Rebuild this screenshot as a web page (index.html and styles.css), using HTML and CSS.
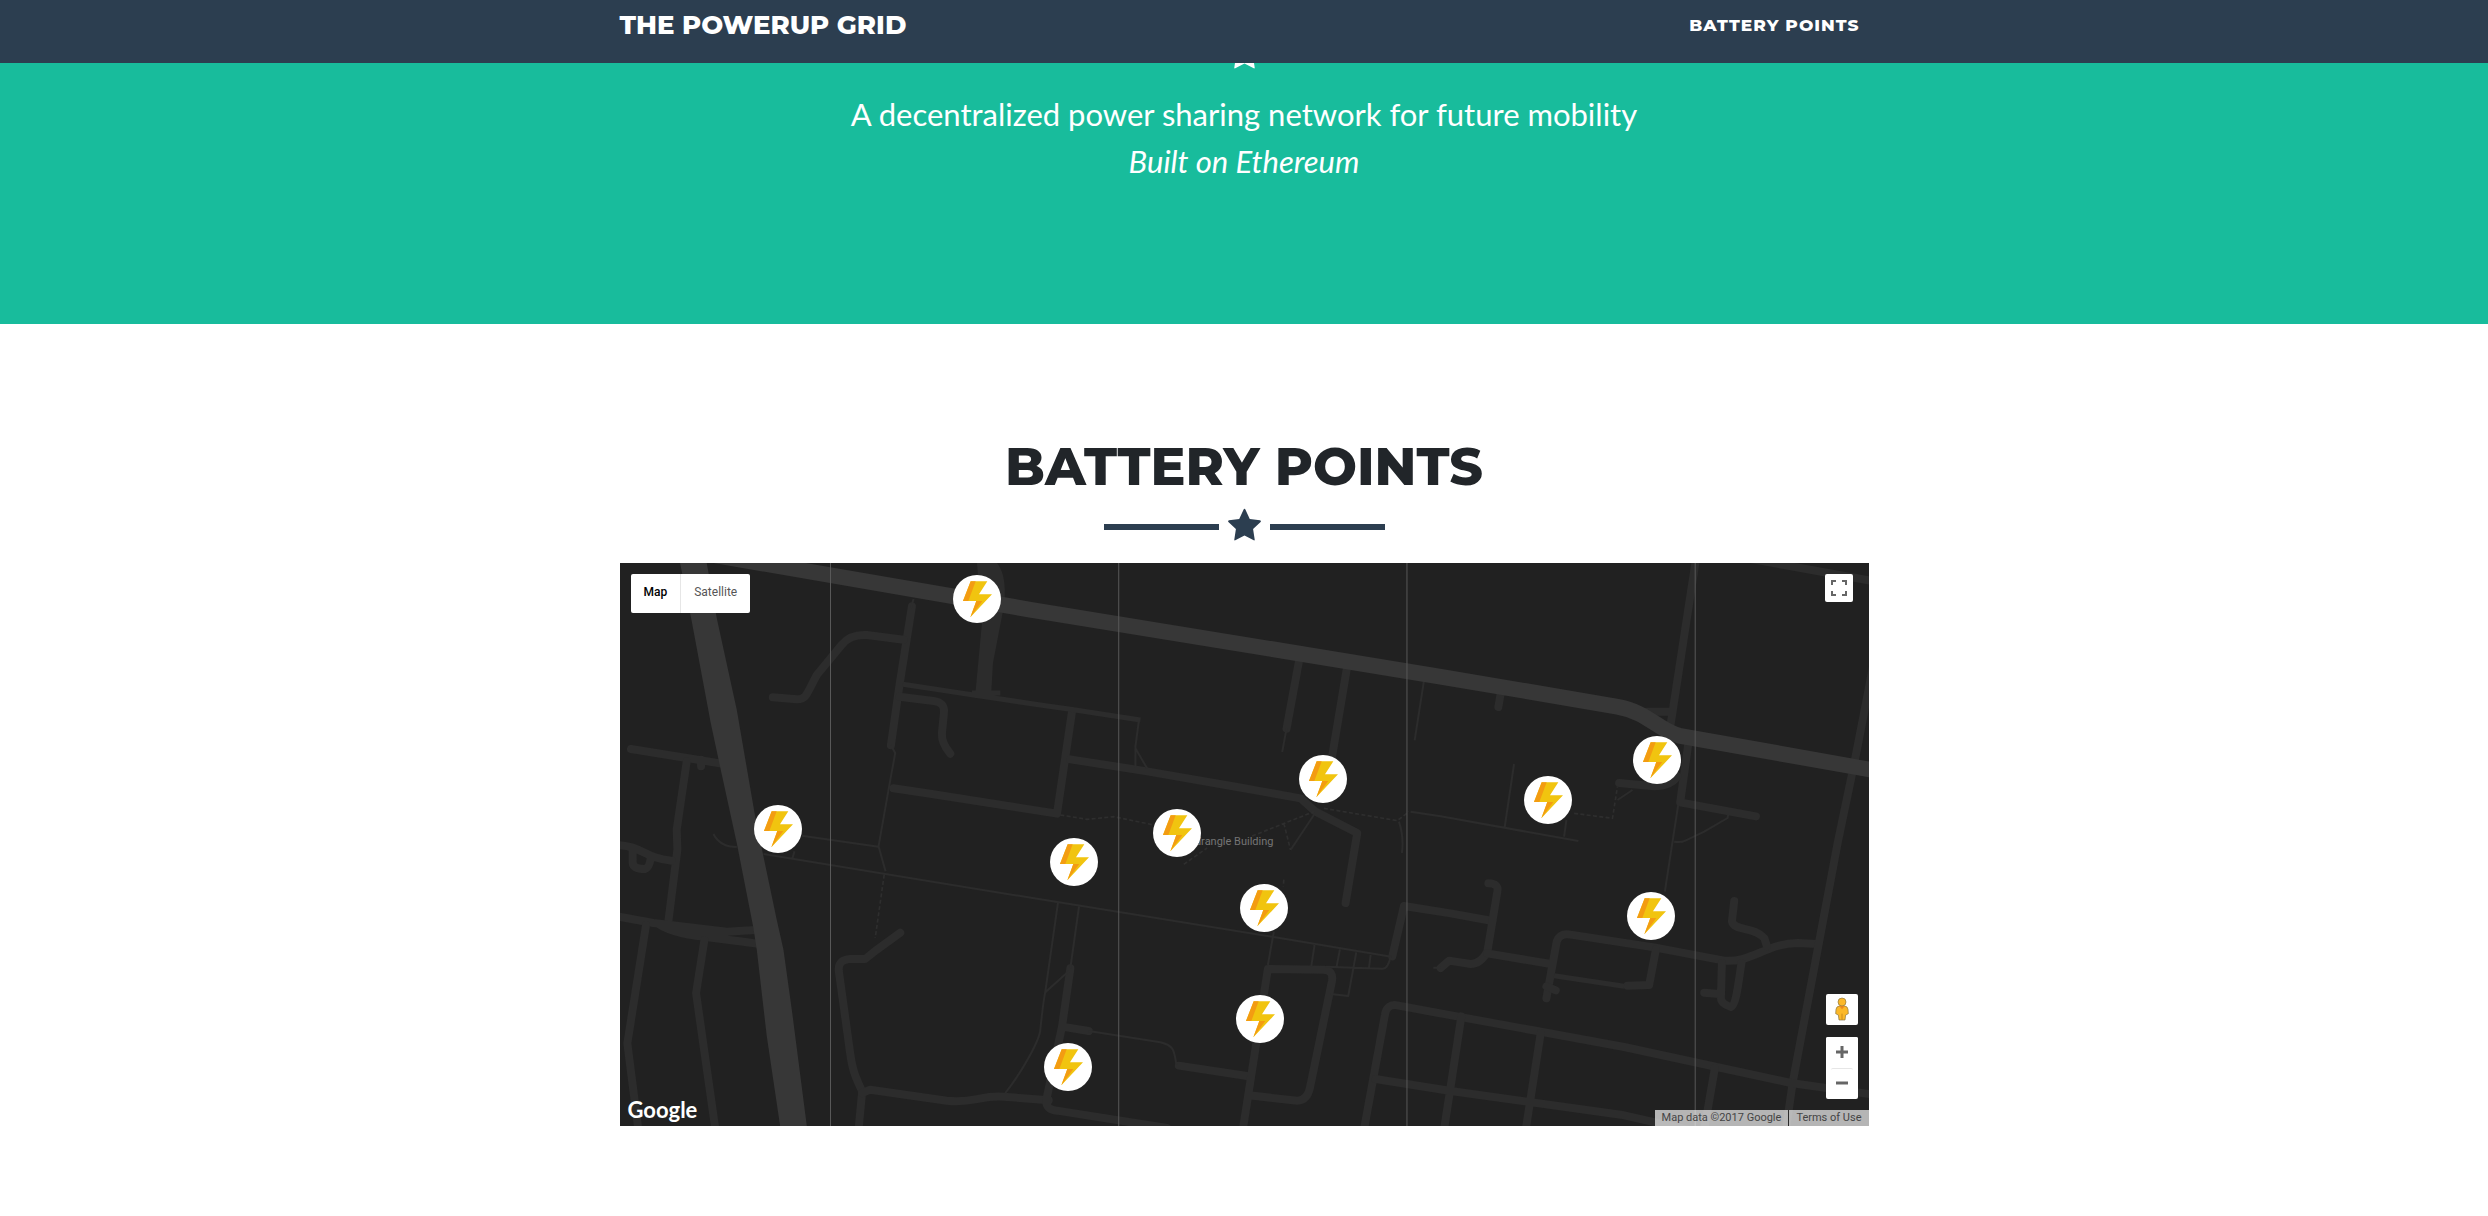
FILE: index.html
```html
<!DOCTYPE html>
<html lang="en">
<head>
<meta charset="utf-8">
<meta name="viewport" content="width=device-width, initial-scale=1">
<title>The PowerUp Grid</title>
<link rel="stylesheet" href="styles.css">
</head>
<body>
<svg class="symbols" aria-hidden="true">
  <symbol id="star" viewBox="0 0 100 96"><path d="M50 0Q52 0 53 3L66 31 97 35Q102 37 98 41L76 62 81 94Q81 97 78 96L50 81 22 96Q19 97 19 94L24 62 2 41Q-2 37 3 35L34 31 47 3Q48 0 50 0Z" fill="currentColor"/></symbol>
  <symbol id="bolt" viewBox="0 0 144 144">
    <path d="M53 19H103L78 58H117L52 127 70 78H30Z" fill="#f1c40f"/>
    <path d="M53 19H68L46 78H30Z" fill="#f39c12"/>
    <path d="M70 78H88L52 127Z" fill="#f39c12"/>
  </symbol>
</svg>

<header class="navbar">
  <nav class="container navbar-row">
    <a class="brand" href="#top">THE POWERUP GRID</a>
    <a class="nav-link" href="#points">BATTERY POINTS</a>
  </nav>
</header>

<main>
  <section class="hero" id="top">
    <div class="divider"><svg class="star"><use href="#star"/></svg></div>
    <p class="lead">A decentralized power sharing network for future mobility<br><em>Built on Ethereum</em></p>
  </section>

  <section class="points container" id="points">
    <h2 class="title">BATTERY POINTS</h2>
    <div class="divider"><svg class="star"><use href="#star"/></svg></div>

    <div class="map">
      <svg class="streets" viewBox="0 0 3744 1689" preserveAspectRatio="none" aria-hidden="true">
        <g class="road">
          <path d="M875 130L838 365 812 547"/>
          <path d="M850 230L740 216Q690 213 665 245L590 336C560 390 560 410 530 409L458 403"/>
          <path d="M838 401L940 414Q975 418 971 450L965 510Q963 540 990 572"/>
          <path d="M820 676L930 692 1310 752 1355 445"/>
          <path d="M33 558L200 585 305 602M243 590V610"/>
          <path d="M200 595L170 800 172 860 145 1075"/>
          <path d="M-10 846C70 850 70 885 155 893M38 860V900Q40 918 75 918 88 915 92 885"/>
          <path d="M-10 1060L100 1080 320 1106 405 1101M115 1083C170 1120 250 1118 410 1142"/>
          <path d="M78 1086L22 1441 55 1700M253 1131L228 1290 286 1700"/>
          <path d="M840 1109L770 1160 735 1188H690Q652 1190 656 1225L690 1471C698 1530 710 1550 726 1585L715 1700"/>
          <path d="M726 1590L750 1580 980 1613C1060 1622 1080 1596 1150 1601L1285 1612"/>
          <path d="M1350 1216L1325 1391 1278 1610Q1275 1640 1310 1643L1640 1695M1325 1391L1405 1404"/>
          <path d="M1675 1508L1880 1539"/>
          <path d="M1867 1700L1942 1218 2110 1220Q2140 1222 2134 1255L2068 1575Q2060 1612 2030 1613L1885 1597"/>
          <path d="M2315 1180L2350 1029 2490 1051 2615 1074"/>
          <path d="M2603 961Q2635 962 2630 985L2600 1166Q2580 1203 2550 1203L2485 1193 2460 1215"/>
          <path d="M2600 1171L2790 1203"/>
          <path d="M2777 1306L2808 1135Q2818 1109 2850 1115L3100 1153 3310 1193C3390 1200 3440 1140 3530 1140L3590 1143"/>
          <path d="M3020 1268L3085 1266 3105 1160M2777 1270L2805 1282"/>
          <path d="M3340 1014L3333 1075C3340 1105 3400 1090 3430 1125L3438 1150"/>
          <path d="M3303 1200L3300 1305Q3300 1322 3330 1332C3348 1325 3355 1235 3362 1200M3250 1289L3295 1293"/>
          <path d="M3760 290L3700 600 3650 840 3515 1560 3495 1700"/>
          <path d="M3225 -10L3150 480M3080 446H3145M3202 545L3178 718 3405 760M3390 -12L3760 55"/>
          <path d="M2640 391L2633 432M2995 660L3100 670Q3150 668 3170 640"/>
          <path d="M1350 589L1580 625 1850 672 2040 706 2085 746 2210 810 2175 1020"/>
          <path d="M2035 296L1998 497M2178 321L2133 590"/>
          <path d="M2230 1700L2293 1355Q2298 1322 2330 1327L2480 1355 3010 1452 3510 1560 3760 1595"/>
          <path d="M2265 1548L2490 1584 3000 1655 3200 1700M2522 1360L2490 1570 2470 1700M2760 1410L2715 1700M3282 1515L3250 1700"/>
        </g>
        <path class="fill" d="M1070 0H1130C1155 30 1160 90 1145 160L1118 300 1112 405H1064L1085 180Z"/>
        <g class="lane">
          <path d="M848 364L1060 396 1260 426 1350 439 1560 471M1055 390H1140M2800 1238L3010 1270"/>
        </g>
        <g class="path">
          <path d="M880 108L872 135M812 547L825 570 805 680 775 850 796 925M545 818L775 851"/>
          <path d="M430 873L1260 1009 1960 1122 2312 1181M523 865L517 886M280 813Q300 852 350 852"/>
          <path d="M1155 1590C1210 1520 1258 1430 1260 1400 1265 1350 1270 1310 1275 1285L1313 1018M1275 1288L1345 1225M1376 1030L1350 1215"/>
          <path d="M1405 1404L1620 1438C1665 1450 1660 1465 1668 1505"/>
          <path d="M1960 1106L1942 1206M2082 1146L2072 1211M2158 1159L2148 1211M2207 1168L2183 1299 2130 1293M2250 1176L2245 1216M2115 1211L2285 1217Q2302 1218 2310 1181"/>
          <path d="M2438 1214H2460M1998 497L1985 567M2410 353L2382 532M1555 476L1545 551V615M1545 556L1580 616"/>
          <path d="M2080 756L2010 861M2335 776Q2350 820 2344 870M2370 746L2460 760 2873 834M2680 603L2652 792M2837 771L2830 821M2990 711L3035 681"/>
          <path d="M3172 726L3132 986M3160 836Q3180 840 3195 832L3250 806 3320 765 3322 755"/>
        </g>
        <g class="trail">
          <path d="M792 935L765 1125M1320 756L1400 769 1480 761 1600 786M1895 819L2080 746M1990 781L2010 861M2110 736L2330 773 2365 746M2860 751L2975 766 2990 671M1690 904L1760 855M1990 950L1988 970"/>
        </g>
        <path class="highway" d="M100 -55L1230 140 2460 341 2990 431C3080 447 3110 500 3175 518L3760 622"/>
        <path class="avenue" d="M180 0L215 175 272 480 302 620 350 840 400 1095 410 1160 440 1420 480 1689H560L515 1340 490 1160 470 1071 428 871 405 760 350 440 290 165 260 0Z"/>
        <path class="tiles" d="M631 0V1689M1495 0V1689M2359 0V1689M3223 0V1689"/>
      </svg>
      <span class="place">Quadrangle Building</span>

      <button class="pin" style="left:28.63%;top:6.45%" aria-label="Battery point 1"><svg><use href="#bolt"/></svg></button>
      <button class="pin" style="left:12.66%;top:47.19%" aria-label="Battery point 2"><svg><use href="#bolt"/></svg></button>
      <button class="pin" style="left:56.30%;top:38.43%" aria-label="Battery point 3"><svg><use href="#bolt"/></svg></button>
      <button class="pin" style="left:44.63%;top:47.96%" aria-label="Battery point 4"><svg><use href="#bolt"/></svg></button>
      <button class="pin" style="left:83.09%;top:34.99%" aria-label="Battery point 5"><svg><use href="#bolt"/></svg></button>
      <button class="pin" style="left:74.31%;top:42.16%" aria-label="Battery point 6"><svg><use href="#bolt"/></svg></button>
      <button class="pin" style="left:36.35%;top:53.11%" aria-label="Battery point 7"><svg><use href="#bolt"/></svg></button>
      <button class="pin" style="left:51.60%;top:61.34%" aria-label="Battery point 8"><svg><use href="#bolt"/></svg></button>
      <button class="pin" style="left:51.26%;top:81.05%" aria-label="Battery point 9"><svg><use href="#bolt"/></svg></button>
      <button class="pin" style="left:35.87%;top:89.58%" aria-label="Battery point 10"><svg><use href="#bolt"/></svg></button>
      <button class="pin" style="left:82.61%;top:62.64%" aria-label="Battery point 11"><svg><use href="#bolt"/></svg></button>

      <div class="map-types">
        <button class="type type-on">Map</button>
        <button class="type">Satellite</button>
      </div>
      <button class="control fullscreen" aria-label="Full screen">
        <svg width="18" height="18" viewBox="0 0 18 18"><path d="M2 6V2H6M12 2H16V6M16 12V16H12M6 16H2V12" fill="none" stroke="#666" stroke-width="2"/></svg>
      </button>
      <div class="tools">
        <button class="control street-view" aria-label="Street View">
          <svg width="14" height="24" viewBox="0 0 42 72"><path d="M13 27Q4 28 3 37L2 50 10 54 12 69H30L32 54 40 50 39 37Q38 28 29 27Z" fill="#fbb829" stroke="#8a7440" stroke-width="2"/><path d="M12 27H30L21 37Z" fill="#ef8a1b"/><path d="M21 50V69" stroke="#c98a1d" stroke-width="3"/><circle cx="21" cy="15" r="12" fill="#fbb829" stroke="#8a7440" stroke-width="2"/></svg>
        </button>
        <div class="zoom">
          <button class="zoom-button" aria-label="Zoom in"><svg width="12" height="12" viewBox="0 0 12 12"><path d="M6 0V12M0 6H12" stroke="#666" stroke-width="3"/></svg></button>
          <button class="zoom-button" aria-label="Zoom out"><svg width="12" height="12" viewBox="0 0 12 12"><path d="M0 6H12" stroke="#666" stroke-width="3"/></svg></button>
        </div>
      </div>
      <a class="google" href="#points">Google</a>
      <div class="credits"><span>Map data ©2017 Google</span><a href="#points">Terms of Use</a></div>
    </div>
  </section>
</main>
</body>
</html>
```
FILE: styles.css
```css
* { box-sizing: border-box; }

body {
  margin: 0;
  background: #fff;
  color: #212529;
  font-family: Lato, "Liberation Sans", sans-serif;
}

button {
  margin: 0;
  padding: 0;
  border: 0;
  background: #fff;
  cursor: pointer;
}

a { color: inherit; text-decoration: none; }
svg { display: block; }
.symbols { display: none; }

.container {
  width: 100%;
  max-width: 1249px;
  margin: 0 auto;
}

.navbar {
  position: fixed;
  inset: 0 0 auto;
  z-index: 10;
  height: 63px;
  background: #2c3e50;
  color: #fff;
  font-family: Montserrat, Inter, sans-serif;
  font-weight: 800;
}

.navbar-row {
  display: flex;
  justify-content: space-between;
  align-items: center;
  height: 50px;
}

.brand { font-size: 26px; }
.nav-link { padding-right: 9px; font-size: 17px; letter-spacing: 1px; }

.hero {
  height: 324px;
  padding-top: 36px;
  background: #18bc9c;
  color: #fff;
  text-align: center;
}

.divider {
  display: flex;
  justify-content: center;
  align-items: center;
  gap: 9px;
}

.divider::before,
.divider::after {
  content: "";
  width: 115px;
  height: 6px;
  margin-top: 5px;
  background: currentColor;
}

.star { width: 33px; height: 33px; }

.lead {
  margin: 22px 0 0;
  font-size: 31px;
  line-height: 47px;
}

.points { padding: 109px 0 90px; }

.title {
  margin: 0 0 8px;
  font: 800 52px/67px Montserrat, Inter, sans-serif;
  text-align: center;
}

.points .divider { color: #2c3e50; }

.map {
  position: relative;
  aspect-ratio: 1249 / 563;
  margin-top: 22px;
  overflow: hidden;
  background: #212121;
  font-family: Roboto, sans-serif;
  font-size: 11px;
}

.streets { width: 100%; height: 100%; fill: none; stroke-linejoin: round; }
.road { stroke: #2c2c2c; stroke-width: 24; stroke-linecap: round; }
.lane { stroke: #2c2c2c; stroke-width: 15; }
.path { stroke: #2c2c2c; stroke-width: 6; }
.trail { stroke: #2e2e2e; stroke-width: 5; stroke-dasharray: 12 7; }
.fill { fill: #2c2c2c; }
.highway { stroke: #373737; stroke-width: 47; }
.avenue { fill: #373737; }
.tiles { stroke: #585858; stroke-width: 3; }

.place {
  position: absolute;
  top: 272px;
  right: 595px;
  color: #757575;
  line-height: 14px;
}

.pin {
  position: absolute;
  width: 48px;
  height: 48px;
  border-radius: 50%;
  transform: translate(-50%, -50%);
}

.pin svg { width: 48px; height: 48px; }

.map-types {
  position: absolute;
  top: 11px;
  left: 11px;
  display: flex;
  height: 39px;
  border-radius: 2px;
  overflow: hidden;
}

.type {
  padding: 0 13px 3px;
  color: #565656;
  font: 400 12px/16px Roboto, sans-serif;
}

.type-on {
  border-right: 1px solid #e6e6e6;
  color: #000;
  font-weight: 500;
}

.control {
  display: grid;
  place-items: center;
  border-radius: 2px;
}

.fullscreen {
  position: absolute;
  top: 11px;
  right: 16px;
  width: 28px;
  height: 28px;
}

.tools {
  position: absolute;
  right: 11px;
  bottom: 27px;
  display: grid;
  gap: 12px;
  width: 32px;
}

.street-view { height: 31px; padding-bottom: 2px; }

.zoom {
  display: grid;
  border-radius: 2px;
  background: #fff;
}

.zoom-button {
  display: grid;
  place-items: center;
  height: 31px;
  padding-bottom: 2px;
  border-radius: 2px;
}

.zoom-button + .zoom-button {
  margin: 0 5px;
  border-top: 1px solid #e6e6e6;
}

.google {
  position: absolute;
  left: 8px;
  bottom: 2px;
  color: #fff;
  font: 700 22px/28px Lato, sans-serif;
}

.credits {
  position: absolute;
  right: 0;
  bottom: 0;
  display: flex;
  gap: 1px;
  color: #444;
  line-height: 16px;
}

.credits > * { padding: 0 7px; background: rgba(245, 245, 245, .7); }
```
